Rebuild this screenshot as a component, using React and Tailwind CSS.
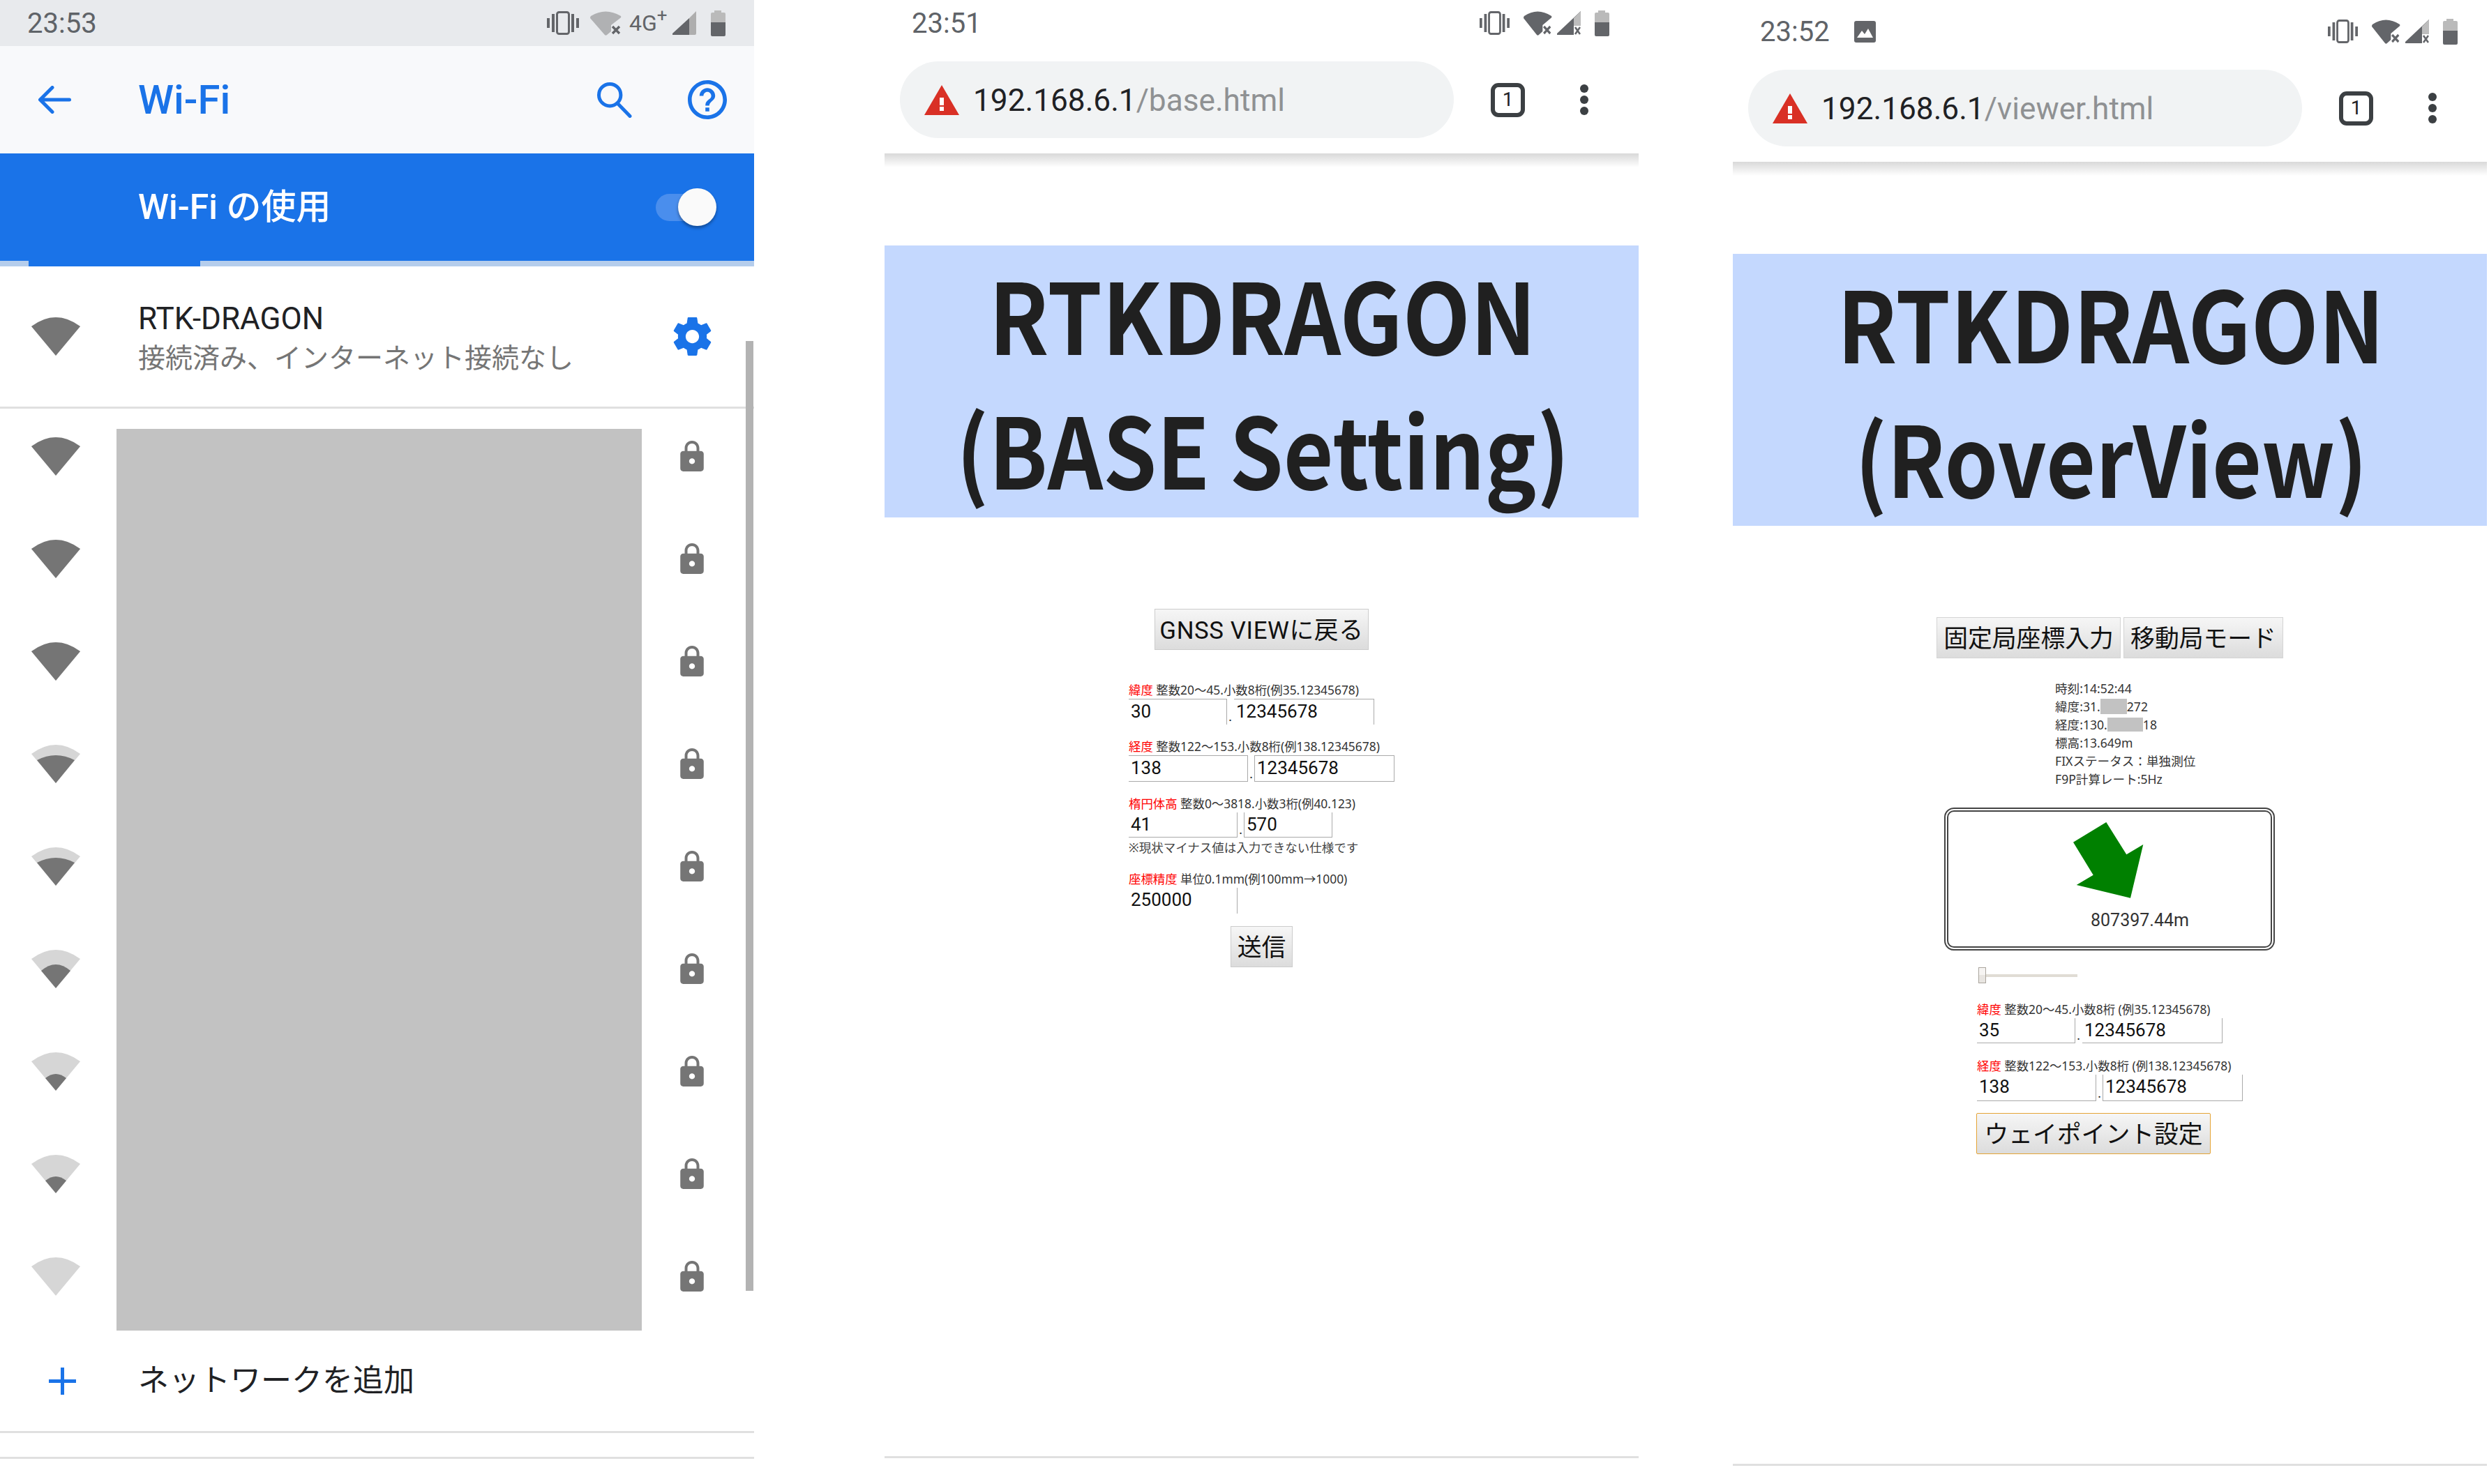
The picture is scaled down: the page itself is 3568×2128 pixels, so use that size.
import React from 'react';

const CJK = '[font-family:Roboto,"Noto_Sans_CJK_JP",sans-serif]';
const NOTO = '[font-family:"Noto_Sans","Noto_Sans_CJK_JP",sans-serif]';
const HEAD = '[font-family:"Noto_Sans_CJK_JP",sans-serif]';

function Vibrate({ w = 46 }) {
  return (
    <svg width={w} height="34" viewBox="0 0 46 34" preserveAspectRatio="none" className="shrink-0">
      <g fill="#636569">
        <rect x="0" y="10" width="4" height="14" />
        <rect x="7" y="4" width="4" height="26" />
        <rect x="35" y="4" width="4" height="26" />
        <rect x="42" y="10" width="4" height="14" />
      </g>
      <rect x="14.5" y="1.5" width="17" height="31" rx="3" fill="none" stroke="#636569" strokeWidth="3" />
    </svg>
  );
}

function WifiX({ fill, w = 45 }) {
  return (
    <svg width={w} height="35" viewBox="0 0 45 35" preserveAspectRatio="none" className="shrink-0">
      <path d="M1 7 Q22 -6 44 7 Q45 9 43 10 L30 20 V29 L24 34 Q22 36 20 33 L0 10 Q0 8 1 7Z" fill={fill} />
      <path d="M32 22 L42 32 M42 22 L32 32" stroke="#636569" strokeWidth="3.4" />
    </svg>
  );
}

function Signal({ x }) {
  return (
    <svg width="34" height="34" viewBox="0 0 34 34" className="shrink-0">
      {x ? (
        <>
          <path d="M34 0 V21 H24 V34 H1 Q-1 34 0 32Z" fill="#636569" />
          <path d="M24 10 L34 0 V21 H24Z" fill="#bdbdbd" />
          <path d="M26 23 L33 33 M33 23 L26 33" stroke="#636569" strokeWidth="2.6" />
        </>
      ) : (
        <>
          <path d="M34 0 V32 Q34 34 32 34 H24 V10Z" fill="#aeaeae" />
          <path d="M24 10 V34 H1 Q-1 34 0 32Z" fill="#636569" />
        </>
      )}
    </svg>
  );
}

function Battery() {
  return (
    <svg width="21" height="37" viewBox="0 0 21 37" className="shrink-0">
      <path d="M5 0 H15 V3 H19 Q21 3 21 5 V17 H0 V5 Q0 3 2 3 H5Z" fill="#bababa" />
      <path d="M0 17 H21 V35 Q21 37 19 37 H2 Q0 37 0 35Z" fill="#636569" />
    </svg>
  );
}

function Wifi({ level }) {
  const inner = {
    4: 'M0 13 Q35 -13 70 13 L35 55Z',
    3: 'M8 22 Q35 8 62 22 L35 55Z',
    2: 'M14 30 Q35 12 56 30 L35 55Z',
    1: 'M20 37 Q35 25 50 37 L35 55Z',
  }[level];
  return (
    <svg width="70" height="55" viewBox="0 0 70 55" className="block shrink-0">
      <path d="M0 13 Q35 -13 70 13 L35 55Z" fill="#d6d6d6" />
      {inner && <path d={inner} fill="#757575" />}
    </svg>
  );
}

function Lock() {
  return (
    <svg width="34" height="44" viewBox="4 1 16 21" className="block shrink-0">
      <path
        fill="#757575"
        d="M18 8h-1V6c0-2.76-2.24-5-5-5S7 3.24 7 6v2H6c-1.1 0-2 .9-2 2v10c0 1.1.9 2 2 2h12c1.1 0 2-.9 2-2V10c0-1.1-.9-2-2-2zm-6 9c-1.1 0-2-.9-2-2s.9-2 2-2 2 .9 2 2-.9 2-2 2zm3.1-9H8.9V6c0-1.71 1.39-3.1 3.1-3.1 1.71 0 3.1 1.39 3.1 3.1v2z"
      />
    </svg>
  );
}

function WifiPanel() {
  const levels = [4, 4, 4, 3, 3, 2, 1, 1, 0];
  return (
    <div className={`relative w-[1081px] h-[2128px] shrink-0 flex flex-col bg-white ${CJK}`}>
      <div className="h-[66px] bg-[#e8eaed] flex items-center pl-[39px] pr-[41px]">
        <span className="pt-[2px] text-[40px] leading-none text-[#5f6368]">23:53</span>
        <div className="ml-auto flex items-center">
          <Vibrate />
          <div className="ml-[16px]"><WifiX fill="#b0b1b3" /></div>
          <span className="ml-[11px] w-[53px] text-[32px] leading-none text-[#636569] whitespace-nowrap">
            4G<sup className="text-[26px] leading-none">+</sup>
          </span>
          <div className="ml-[9px]"><Signal /></div>
          <div className="ml-[21px]"><Battery /></div>
        </div>
      </div>
      <div className="h-[154px] bg-[#f8f9fb] flex items-center">
        <svg width="47" height="40" viewBox="0 0 47 40" className="ml-[55px] shrink-0">
          <path d="M44.5 20 H3 M20 2.5 L2.5 20 L20 37.5" fill="none" stroke="#1a73e8" strokeWidth="5" strokeLinecap="round" strokeLinejoin="round" />
        </svg>
        <span className="ml-[96px] text-[58px] leading-none font-medium text-[#1a73e8]">Wi-Fi</span>
        <svg width="50" height="51" viewBox="0 0 50 51" className="ml-auto shrink-0">
          <circle cx="18.2" cy="18.2" r="15.7" fill="none" stroke="#1a73e8" strokeWidth="5" />
          <path d="M30 31 L47 48.5" stroke="#1a73e8" strokeWidth="5" strokeLinecap="round" />
        </svg>
        <svg width="56" height="56" viewBox="2 2 20 20" className="ml-[80px] mr-[39px] shrink-0">
          <path
            fill="#1a73e8"
            d="M11 18h2v-2h-2v2zm1-16C6.48 2 2 6.48 2 12s4.48 10 10 10 10-4.48 10-10S17.52 2 12 2zm0 18c-4.41 0-8-3.59-8-8s3.59-8 8-8 8 3.59 8 8-3.59 8-8 8zm0-14c-2.21 0-4 1.79-4 4h2c0-1.1.9-2 2-2s2 .9 2 2c0 2-3 1.75-3 5h2c0-2.25 3-2.5 3-5 0-2.21-1.79-4-4-4z"
          />
        </svg>
      </div>
      <div className="h-[154px] bg-[#1a73e8] flex items-center">
        <span className="ml-[198px] text-[50px] leading-none font-medium text-white">Wi-Fi の使用</span>
        <div className="relative ml-auto mr-[54px] w-[87px] h-[54px] flex items-center">
          <div className="w-[60px] h-[39px] rounded-full bg-[#4a8eed]" />
          <div className="absolute right-0 top-0 w-[55px] h-[54px] rounded-full bg-[#fafafa] shadow-[0_3px_4px_rgba(0,0,0,0.35)]" />
        </div>
      </div>
      <div className="h-[8px] bg-[#b5cdec]">
        <div className="ml-[41px] w-[246px] h-full bg-[#1a73e8]" />
      </div>
      <div className="h-[201px] flex items-center">
        <div className="ml-[45px]"><Wifi level={4} /></div>
        <div className="ml-[83px] pt-[6px] flex flex-col">
          <span className="text-[44px] leading-[52px] text-[#202124]">RTK-DRAGON</span>
          <span className="mt-[5px] text-[39px] leading-[52px] text-[#757575]">接続済み、インターネット接続なし</span>
        </div>
        <svg width="55" height="55" viewBox="2.5 2 19 20" className="ml-auto mr-[61px] shrink-0">
          <path
            fill="#1a73e8"
            d="M19.43 12.98c.04-.32.07-.64.07-.98s-.03-.66-.07-.98l2.11-1.65c.19-.15.24-.42.12-.64l-2-3.46c-.12-.22-.39-.3-.61-.22l-2.49 1c-.52-.4-1.08-.73-1.69-.98l-.38-2.65C14.46 2.18 14.25 2 14 2h-4c-.25 0-.46.18-.49.42l-.38 2.65c-.61.25-1.17.59-1.69.98l-2.49-1c-.23-.09-.49 0-.61.22l-2 3.46c-.13.22-.07.49.12.64l2.11 1.65c-.04.32-.07.65-.07.98s.03.66.07.98l-2.11 1.65c-.19.15-.24.42-.12.64l2 3.46c.12.22.39.3.61.22l2.49-1c.52.4 1.08.73 1.69.98l.38 2.65c.03.24.24.42.49.42h4c.25 0 .46-.18.49-.42l.38-2.65c.61-.25 1.17-.59 1.69-.98l2.49 1c.23.09.49 0 .61-.22l2-3.46c.12-.22.07-.49-.12-.64l-2.01-1.65zM12 15.5c-1.93 0-3.5-1.57-3.5-3.5s1.57-3.5 3.5-3.5 3.5 1.57 3.5 3.5-1.57 3.5-3.5 3.5z"
          />
        </svg>
      </div>
      <div className="h-[3px] bg-[#e0e0e0]" />
      <div className="h-[1322px] flex items-start">
        <div className="ml-[45px] pt-[41px] flex flex-col gap-[92px]">
          {levels.map((l, i) => <Wifi key={i} level={l} />)}
        </div>
        <div className="ml-[52px] mt-[29px] w-[753px] h-[1293px] bg-[#c2c2c2]" />
        <div className="ml-[55px] pt-[46px] flex flex-col gap-[103px]">
          {levels.map((_, i) => <Lock key={i} />)}
        </div>
      </div>
      <div className="h-[144px] flex items-center">
        <svg width="39" height="39" viewBox="0 0 39 39" className="ml-[70px] shrink-0">
          <path d="M19.5 0 V39 M0 19.5 H39" stroke="#1a73e8" strokeWidth="5" />
        </svg>
        <span className="ml-[89px] text-[44px] leading-none text-[#202124]">ネットワークを追加</span>
      </div>
      <div className="h-[3px] bg-[#e0e0e0]" />
      <div className="h-[34px]" />
      <div className="h-[3px] bg-[#e0e0e0]" />
      <div className="absolute left-[1069px] top-[489px] w-[11px] h-[1362px] bg-[#b3b3b3]" />
    </div>
  );
}

function StatusBar({ time, photo, tall }) {
  return (
    <div className={`${tall ? 'h-[78px] pt-[12px]' : 'h-[66px]'} flex items-center pl-[39px] pr-[42px]`}>
      <span className="pt-[2px] text-[40px] leading-none text-[#5f6368]">{time}</span>
      {photo && (
        <svg width="31" height="31" viewBox="0 0 31 31" className="ml-[35px] shrink-0">
          <rect width="31" height="31" rx="3" fill="#636569" />
          <path d="M4 24 L11 14 L15 19 L20 11 L27 24Z" fill="#fff" />
        </svg>
      )}
      <div className="ml-auto flex items-center">
        <Vibrate w={43} />
        <div className="ml-[20px]"><WifiX fill="#636569" w={41} /></div>
        <div className="ml-[7px]"><Signal x /></div>
        <div className="ml-[20px]"><Battery /></div>
      </div>
    </div>
  );
}

function Toolbar({ path }) {
  return (
    <>
      <div className="h-[154px] py-[22px] flex items-center">
        <div className="ml-[22px] w-[794px] h-[110px] rounded-full bg-[#f1f3f4] flex items-center">
          <svg width="50" height="43" viewBox="0 0 50 43" className="ml-[35px] shrink-0">
            <path d="M25 0 L50 43 H0Z" fill="#d93025" />
            <rect x="22" y="18" width="6" height="11" fill="#fff" />
            <rect x="22" y="31" width="6" height="6" fill="#fff" />
          </svg>
          <span className="ml-[20px] pt-[3px] text-[44.2px] leading-none text-[#202124] whitespace-nowrap">
            192.168.6.1<span className="text-[#8f9193]">{path}</span>
          </span>
        </div>
        <div className="ml-[53px] w-[49px] h-[49px] rounded-[11px] border-[6px] border-[#3c4043] flex items-center justify-center text-[28px] leading-none text-[#202124]">
          1
        </div>
        <div className="ml-[79px] flex flex-col gap-[4px]">
          <div className="w-[12px] h-[12px] rounded-full bg-[#3c4043]" />
          <div className="w-[12px] h-[12px] rounded-full bg-[#3c4043]" />
          <div className="w-[12px] h-[12px] rounded-full bg-[#3c4043]" />
        </div>
      </div>
      <div className="h-[20px] bg-gradient-to-b from-[#d9d9d9] to-white" />
    </>
  );
}

function Banner({ line2, cls }) {
  return (
    <div className={`mt-[112px] h-[390px] bg-[#c4d8fe] flex flex-col items-center pl-[3px] text-[140px] leading-[193px] font-bold text-[#202020] ${HEAD}`}>
      <div className="whitespace-nowrap scale-x-[0.9]">RTKDRAGON</div>
      <div className={`whitespace-nowrap ${cls}`}>{line2}</div>
    </div>
  );
}

function Label({ red, children }) {
  return (
    <div className={`h-[26px] text-[17.4px] leading-[26px] text-[#333] whitespace-nowrap ${NOTO}`}>
      <span className="text-[#ff0000]">{red}</span> {children}
    </div>
  );
}

function Field({ value, cls }) {
  return (
    <div className={`pl-[3px] border-[#aaaaaa] text-[26px] leading-[34px] text-[#111] ${cls}`}>{value}</div>
  );
}

function Dot({ w }) {
  return <div className={`${w} self-end mb-[2px] text-[20px] leading-[20px] text-[#333] pl-[2px]`}>.</div>;
}

function Btn({ children, cls }) {
  return (
    <div className={`h-[59px] pt-[3px] flex items-center justify-center border bg-gradient-to-b from-[#f6f6f6] to-[#dcdcdc] text-[34.8px] leading-none text-[#111] whitespace-nowrap ${cls}`}>
      {children}
    </div>
  );
}

function BasePanel() {
  return (
    <div className={`w-[1081px] h-[2128px] shrink-0 flex flex-col bg-white ${CJK}`}>
      <StatusBar time="23:51" />
      <Toolbar path="/base.html" />
      <Banner line2="(BASE Setting)" cls="scale-x-[0.884]" />
      <div className="pl-[350px]">
        <Btn cls="mt-[131px] ml-[37px] w-[307px] border-[#cccccc] tracking-[0.6px]">GNSS VIEWに戻る</Btn>
        <div className="mt-[44px]">
          <Label red="緯度">整数20〜45.小数8桁(例35.12345678)</Label>
          <div className="flex h-[37px]">
            <Field value="30" cls="w-[141px] border-t border-r" />
            <Dot w="w-[10px]" />
            <Field value="12345678" cls="w-[201px] border-t border-r" />
          </div>
        </div>
        <div className="mt-[18px]">
          <Label red="経度">整数122〜153.小数8桁(例138.12345678)</Label>
          <div className="flex h-[38px]">
            <Field value="138" cls="w-[171px] border-t border-r border-b" />
            <Dot w="w-[9px]" />
            <Field value="12345678" cls="w-[201px] border" />
          </div>
        </div>
        <div className="mt-[18px]">
          <Label red="楕円体高">整数0〜3818.小数3桁(例40.123)</Label>
          <div className="flex h-[36px]">
            <Field value="41" cls="w-[156px] border-r border-b" />
            <Dot w="w-[9px]" />
            <Field value="570" cls="w-[127px] border-l border-r border-b" />
          </div>
          <div className={`h-[28px] pt-[1px] text-[17.5px] leading-[26px] text-[#444] ${NOTO}`}>※現状マイナス値は入力できない仕様です</div>
        </div>
        <div className="mt-[18px]">
          <Label red="座標精度">単位0.1mm(例100mm→1000)</Label>
          <div className="flex h-[37px]">
            <Field value="250000" cls="w-[156px] border-r" />
          </div>
        </div>
        <Btn cls="mt-[18px] ml-[146px] w-[89px] h-[58px] border-[#cccccc]">送信</Btn>
      </div>
      <div className="mt-auto mb-[37px] h-[3px] bg-[#e0e0e0]" />
    </div>
  );
}

function ViewerPanel() {
  return (
    <div className={`w-[1081px] h-[2128px] shrink-0 flex flex-col bg-white ${CJK}`}>
      <StatusBar time="23:52" photo tall />
      <Toolbar path="/viewer.html" />
      <Banner line2="(RoverView)" cls="scale-x-[0.876]" />
      <div className="mt-[131px] ml-[292px] flex gap-[4px]">
        <Btn cls="w-[264px] border-[#d4d4d4]">固定局座標入力</Btn>
        <Btn cls="w-[229px] border-[#d4d4d4]">移動局モード</Btn>
      </div>
      <div className={`mt-[30px] ml-[462px] text-[17.6px] leading-[26px] text-[#333] ${NOTO}`}>
        <div>時刻:14:52:44</div>
        <div className="flex items-center">緯度:31.<span className="w-[38px] h-[22px] bg-[#c2c2c2]" />272</div>
        <div className="flex items-center">経度:130.<span className="w-[51px] h-[20px] bg-[#c2c2c2]" />18</div>
        <div>標高:13.649m</div>
        <div>FIXステータス：単独測位</div>
        <div>F9P計算レート:5Hz</div>
      </div>
      <div className="mt-[28px] ml-[303px] w-[474px] h-[205px] rounded-[14px] border-[6px] border-double border-[#444] flex flex-col">
        <svg width="101" height="109" viewBox="0 0 101 109" className="ml-[179px] mt-[15px] shrink-0">
          <polygon points="47.3,0 0,28.7 28.7,75.7 4.7,90 82,108.7 100.3,32 76.3,46.3" fill="#008000" />
        </svg>
        <div className="ml-[204px] mt-[17px] text-[25px] leading-[30px] text-[#333]">807397.44m</div>
      </div>
      <div className="mt-[24px] ml-[352px] flex items-center">
        <div className="w-[11px] h-[23px] border border-[#aaa59d] bg-gradient-to-b from-[#f6f4f2] from-50% to-[#e8e5e1] to-50%" />
        <div className="w-[131px] h-[4px] bg-[#e0dcd5]" />
      </div>
      <div className="ml-[350px]">
        <div className="mt-[24px]">
          <Label red="緯度">整数20〜45.小数8桁 (例35.12345678)</Label>
          <div className="flex h-[36px]">
            <Field value="35" cls="w-[141px] border-r border-b" />
            <Dot w="w-[10px]" />
            <Field value="12345678" cls="w-[201px] border-r border-b" />
          </div>
        </div>
        <div className="mt-[19px]">
          <Label red="経度">整数122〜153.小数8桁 (例138.12345678)</Label>
          <div className="flex h-[38px]">
            <Field value="138" cls="w-[171px] border-r border-b" />
            <Dot w="w-[9px]" />
            <Field value="12345678" cls="w-[201px] border-l border-r border-b" />
          </div>
        </div>
        <Btn cls="mt-[17px] -ml-[1px] w-[336px] rounded-[2px] border-[#e5a435]">ウェイポイント設定</Btn>
      </div>
      <div className="mt-auto mb-[26px] h-[3px] bg-[#e0e0e0]" />
    </div>
  );
}

export default function App() {
  return (
    <div className="flex w-[3568px] h-[2128px] overflow-hidden bg-white">
      <WifiPanel />
      <div className="w-[187px] shrink-0" />
      <BasePanel />
      <div className="w-[135px] shrink-0" />
      <ViewerPanel />
    </div>
  );
}
